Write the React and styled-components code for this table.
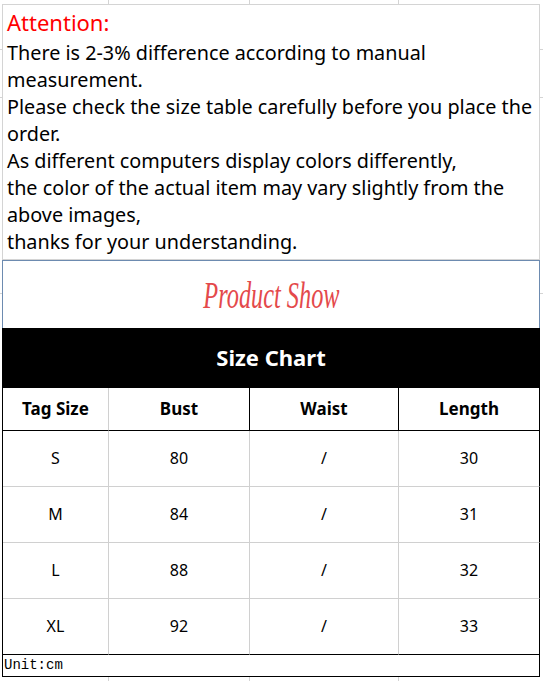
import React from "react";
import styled, { createGlobalStyle } from "styled-components";

const GlobalStyle = createGlobalStyle`
  html, body {
    margin: 0;
    padding: 0;
    background: #fff;
  }
  * {
    box-sizing: border-box;
  }
`;

const grid = "#d4d4d4";

// the faint spreadsheet gridlines peeking out around the merged cells
const Sheet = styled.div`
  width: 543px;
  height: 681px;
  padding: 4px 3px 0 2px;
  font-family: "Noto Sans", "Noto Sans CJK SC", sans-serif;
  color: #000;
  background-color: #fff;
  background-image:
    linear-gradient(to right, transparent 108px, ${grid} 108px, ${grid} 109px, transparent 109px),
    linear-gradient(to right, transparent 249px, ${grid} 249px, ${grid} 250px, transparent 250px),
    linear-gradient(to right, transparent 398px, ${grid} 398px, ${grid} 399px, transparent 399px),
    linear-gradient(to bottom, transparent 49px, ${grid} 49px, ${grid} 50px, transparent 50px),
    linear-gradient(to bottom, transparent 97px, ${grid} 97px, ${grid} 98px, transparent 98px),
    linear-gradient(to bottom, transparent 293px, ${grid} 293px, ${grid} 294px, transparent 294px);
`;

const Notice = styled.div`
  height: 256px;
  padding: 4px 0 0 4px;
  background: #fff;
  border: 1px solid ${grid};
`;

const Heading = styled.div`
  color: #ff0000;
  font-size: 22px;
  line-height: 27px;
  margin-bottom: 3px;
`;

const Line = styled.div`
  font-size: 19.8px;
  line-height: 27px;
  white-space: nowrap;
`;

const Banner = styled.div`
  height: 68px;
  background: #fff;
  border: 1px solid #6d8bb0;
  border-bottom: none;
  display: flex;
  justify-content: center;
  align-items: flex-end;
  padding-bottom: 14px;
`;

const BannerText = styled.span`
  display: inline-block;
  font-family: "Liberation Serif", serif;
  font-style: italic;
  font-size: 38px;
  line-height: 38px;
  color: #e4494b;
  transform: scaleX(0.64);
  white-space: nowrap;
`;

const TitleBar = styled.div`
  height: 60px;
  background: #000;
  color: #fff;
  font-weight: 700;
  font-size: 22px;
  display: flex;
  align-items: center;
  justify-content: center;
  padding-bottom: 2px;
`;

const Table = styled.div`
  display: grid;
  grid-template-columns: 106px 141px 149px 141px;
  border-left: 1px solid #000;
  background: #fff;
`;

const Cell = styled.div`
  height: ${(p) => (p.$head ? 43 : 56)}px;
  display: flex;
  align-items: center;
  justify-content: center;
  font-size: ${(p) => (p.$head ? 17 : 16)}px;
  font-weight: ${(p) => (p.$head ? 700 : 400)};
  border-right: 1px solid ${(p) => (p.$dark ? "#000" : "#d0d0d0")};
  border-bottom: 1px solid ${(p) => (p.$bottomDark ? "#000" : "#d0d0d0")};
  padding-bottom: 2px;
`;

const UnitRow = styled.div`
  height: 22px;
  background: #fff;
  border: 1px solid #000;
  border-top: none;
  font-family: "Liberation Mono", monospace;
  font-size: 14px;
  line-height: 20px;
  padding-left: 1px;
`;

const header = ["Tag Size", "Bust", "Waist", "Length"];
const rows = [
  ["S", "80", "/", "30"],
  ["M", "84", "/", "31"],
  ["L", "88", "/", "32"],
  ["XL", "92", "/", "33"],
];

export default function App() {
  return (
    <>
      <GlobalStyle />
      <Sheet>
        <Notice>
          <Heading>Attention:</Heading>
          <Line>There is 2-3% difference according to manual</Line>
          <Line>measurement.</Line>
          <Line>Please check the size table carefully before you place the</Line>
          <Line>order.</Line>
          <Line>As different computers display colors differently,</Line>
          <Line>the color of the actual item may vary slightly from the</Line>
          <Line>above images,</Line>
          <Line>thanks for your understanding.</Line>
        </Notice>
        <Banner>
          <BannerText>Product Show</BannerText>
        </Banner>
        <TitleBar>Size Chart</TitleBar>
        <Table>
          {header.map((h, i) => (
            <Cell key={h} $head $dark={i > 0} $bottomDark>
              {h}
            </Cell>
          ))}
          {rows.map((r, ri) =>
            r.map((v, ci) => (
              <Cell
                key={ri + "-" + ci}
                $dark={ci === 3}
                $bottomDark={ri === rows.length - 1}
              >
                {v}
              </Cell>
            ))
          )}
        </Table>
        <UnitRow>Unit:cm</UnitRow>
      </Sheet>
    </>
  );
}
